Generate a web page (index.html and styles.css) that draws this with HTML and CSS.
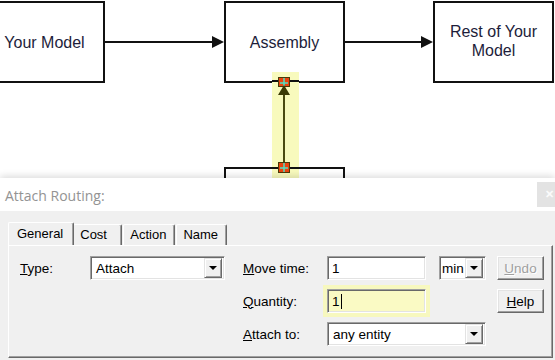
FILE: index.html
```html
<!DOCTYPE html>
<html lang="en">
<head>
    <meta charset="UTF-8">
    <title>Attach Routing</title>
    <link rel="stylesheet" href="styles.css">
</head>
<body>
    <div class="diagram">
        <div class="node node-model">Your Model</div>
        <div class="node node-assembly">Assembly</div>
        <div class="node node-rest">Rest of Your<br>Model</div>
        <div class="node node-below"></div>

        <svg class="links" width="555" height="178" viewBox="0 0 555 178">
            <!-- main flow arrows -->
            <line x1="105" y1="42" x2="214" y2="42" stroke="#111" stroke-width="2"/>
            <polygon points="212,36 224,42 212,48" fill="#111"/>
            <line x1="345" y1="42" x2="423" y2="42" stroke="#111" stroke-width="2"/>
            <polygon points="421,36 433,42 421,48" fill="#111"/>

            <!-- selected routing -->
            <rect x="272" y="72" width="27" height="106" fill="#f8fabd"/>
            <line x1="272" y1="81" x2="299" y2="81" stroke="#111" stroke-width="2"/>
            <line x1="272" y1="168" x2="299" y2="168" stroke="#111" stroke-width="2"/>
            <line x1="284" y1="95" x2="284" y2="163" stroke="#4a4a10" stroke-width="2"/>

            <rect x="278.5" y="77.5" width="11" height="9" fill="#e9440e" stroke="#4a3a08"/>
            <line x1="280" y1="83" x2="288" y2="83" stroke="#52e0c4" stroke-width="1.5"/>
            <line x1="284" y1="78" x2="284" y2="86" stroke="#52e0c4" stroke-width="1.5"/>
            <polygon points="284,85 278,95 290,95" fill="#3b3b06"/>

            <rect x="278.5" y="162.5" width="11" height="10" fill="#e9440e" stroke="#4a3a08"/>
            <line x1="280" y1="168" x2="288" y2="168" stroke="#52e0c4" stroke-width="1.5"/>
            <line x1="284" y1="163" x2="284" y2="172" stroke="#52e0c4" stroke-width="1.5"/>
        </svg>
    </div>

    <div class="dialog">
        <div class="titlebar">
            <span class="title">Attach Routing:</span>
            <span class="close">&#x2715;</span>
        </div>

        <div class="dialog-body">
            <div class="tabs">
                <div class="tab selected">General</div>
                <div class="tab">Cost</div>
                <div class="tab">Action</div>
                <div class="tab">Name</div>
            </div>

            <div class="panel">
                <div class="type-group">
                    <label class="label type-label"><u>T</u>ype:</label>
                    <div class="combo combo-type">
                        <span class="combo-text">Attach</span>
                        <span class="drop"><i class="arrow"></i></span>
                    </div>
                </div>

                <div class="fields">
                    <label class="label"><u>M</u>ove time:</label>
                    <div class="field">1</div>
                    <div class="combo combo-unit">
                        <span class="combo-text">min</span>
                        <span class="drop"><i class="arrow"></i></span>
                    </div>
                    <button class="btn" disabled><u>U</u>ndo</button>

                    <label class="label"><u>Q</u>uantity:</label>
                    <div class="field focused">1<span class="caret"></span></div>
                    <div></div>
                    <button class="btn"><u>H</u>elp</button>

                    <label class="label"><u>A</u>ttach to:</label>
                    <div class="combo combo-attach">
                        <span class="combo-text">any entity</span>
                        <span class="drop"><i class="arrow"></i></span>
                    </div>
                </div>
            </div>
        </div>
    </div>
</body>
</html>
```

FILE: styles.css
```css
body {
    margin: 0;
    width: 555px;
    height: 360px;
    overflow: hidden;
    background-color: #f0f0f0;
    font-family: 'Liberation Sans', Arial, sans-serif;
}

/* model diagram */

.diagram {
    position: relative;
    height: 178px;
    background-color: #fff;
    overflow: hidden;
}

.node {
    position: absolute;
    box-sizing: border-box;
    width: 121px;
    height: 82px;
    top: 1px;
    border: 2px solid #111;
    background-color: #fff;
    color: #1d1d3a;
    font-size: 16px;
    line-height: 19px;
    display: flex;
    align-items: center;
    justify-content: center;
    text-align: center;
}

.node-model {
    left: -16px;
}

.node-assembly {
    left: 224px;
}

.node-rest {
    left: 433px;
    padding-bottom: 2px;
}

.node-below {
    left: 224px;
    top: 167px;
    height: 40px;
}

.links {
    position: absolute;
    left: 0;
    top: 0;
}

/* dialog */

.dialog {
    position: relative;
    box-shadow: 0 -2px 7px rgba(0, 0, 0, 0.14);
}

.titlebar {
    height: 33px;
    background-color: #fff;
    display: flex;
    justify-content: space-between;
    align-items: flex-start;
}

.title {
    margin: 8px 0 0 5px;
    font-family: 'Open Sans', sans-serif;
    font-size: 14px;
    color: #939393;
}

.close {
    box-sizing: border-box;
    width: 18px;
    height: 25px;
    margin-top: 4px;
    padding-left: 6px;
    background-color: #e3e3e3;
    color: #fbfbfb;
    font-size: 11px;
    font-weight: bold;
    display: flex;
    align-items: center;
    justify-content: center;
}

.dialog-body {
    height: 149px;
    padding: 11px 2px 0 8px;
    box-sizing: border-box;
    font-size: 13px;
    color: #000;
}

.tabs {
    display: flex;
    align-items: flex-end;
    gap: 1px;
    padding-left: 2px;
}

.tab {
    box-sizing: border-box;
    height: 21px;
    min-width: 49px;
    padding: 2px 8px 0 6px;
    border: 1px solid #fff;
    border-bottom: none;
    border-right-color: #696969;
    box-shadow: inset -1px 0 #a0a0a0;
    border-radius: 2px 2px 0 0;
}

.tab.selected {
    height: 23px;
    margin: 0 -2px 0 -2px;
    padding: 3px 10px 0 8px;
    position: relative;
    background-color: #f0f0f0;
    z-index: 1;
}

.panel {
    box-sizing: border-box;
    height: 113px;
    border: 1px solid #fff;
    border-right-color: #696969;
    border-bottom-color: #696969;
    box-shadow: inset -1px -1px #a0a0a0;
    display: flex;
    align-items: flex-start;
    padding: 10px 0 0 11px;
}

.type-group {
    display: flex;
    align-items: center;
    height: 24px;
}

.type-label {
    width: 70px;
}

.fields {
    margin-left: 18px;
    display: grid;
    grid-template-columns: 84px 112px 58px 47px;
    grid-template-rows: 24px 24px 24px;
    row-gap: 9px;
    align-items: center;
}

.label {
    font-size: 13.5px;
}

/* sunken controls */

.field,
.combo {
    box-sizing: border-box;
    height: 24px;
    background-color: #fff;
    border: 1px solid;
    border-color: #a0a0a0 #fff #fff #a0a0a0;
    box-shadow: inset 1px 1px #696969, inset -1px -1px #e3e3e3;
    font-size: 13.5px;
    display: flex;
    align-items: center;
}

.field {
    width: 99px;
    padding-left: 4px;
}

.field.focused {
    background-color: #fafac4;
    box-shadow: inset 1px 1px #696969, inset -1px -1px #e3e3e3, 0 0 0 4px #f7f8bf;
}

.caret {
    display: inline-block;
    width: 1px;
    height: 15px;
    margin-left: 1px;
    background-color: #000;
}

.combo {
    justify-content: space-between;
    padding: 2px;
}

.combo-text {
    padding-left: 3px;
}

.combo-type {
    width: 135px;
}

.combo-unit {
    width: 47px;
}

.combo-unit .combo-text {
    padding-left: 0;
}

.combo-attach {
    grid-column: 2 / 4;
    width: 159px;
}

.drop {
    box-sizing: border-box;
    width: 18px;
    height: 20px;
    background-color: #f0f0f0;
    border: 1px solid;
    border-color: #e3e3e3 #696969 #696969 #e3e3e3;
    box-shadow: inset 1px 1px #fff, inset -1px -1px #a0a0a0;
    display: flex;
    align-items: center;
    justify-content: center;
}

.arrow {
    width: 0;
    height: 0;
    border-left: 4px solid transparent;
    border-right: 4px solid transparent;
    border-top: 4px solid #000;
}

/* push buttons */

.btn {
    box-sizing: border-box;
    width: 47px;
    height: 24px;
    padding: 0;
    background-color: #f0f0f0;
    border: 1px solid;
    border-color: #fff #696969 #696969 #fff;
    box-shadow: inset -1px -1px #a0a0a0, inset 1px 1px #e3e3e3;
    font-family: 'Liberation Sans', Arial, sans-serif;
    font-size: 13.5px;
    color: #000;
}

.btn:disabled {
    color: #a0a0a0;
    text-shadow: 1px 1px #fff;
}
```
